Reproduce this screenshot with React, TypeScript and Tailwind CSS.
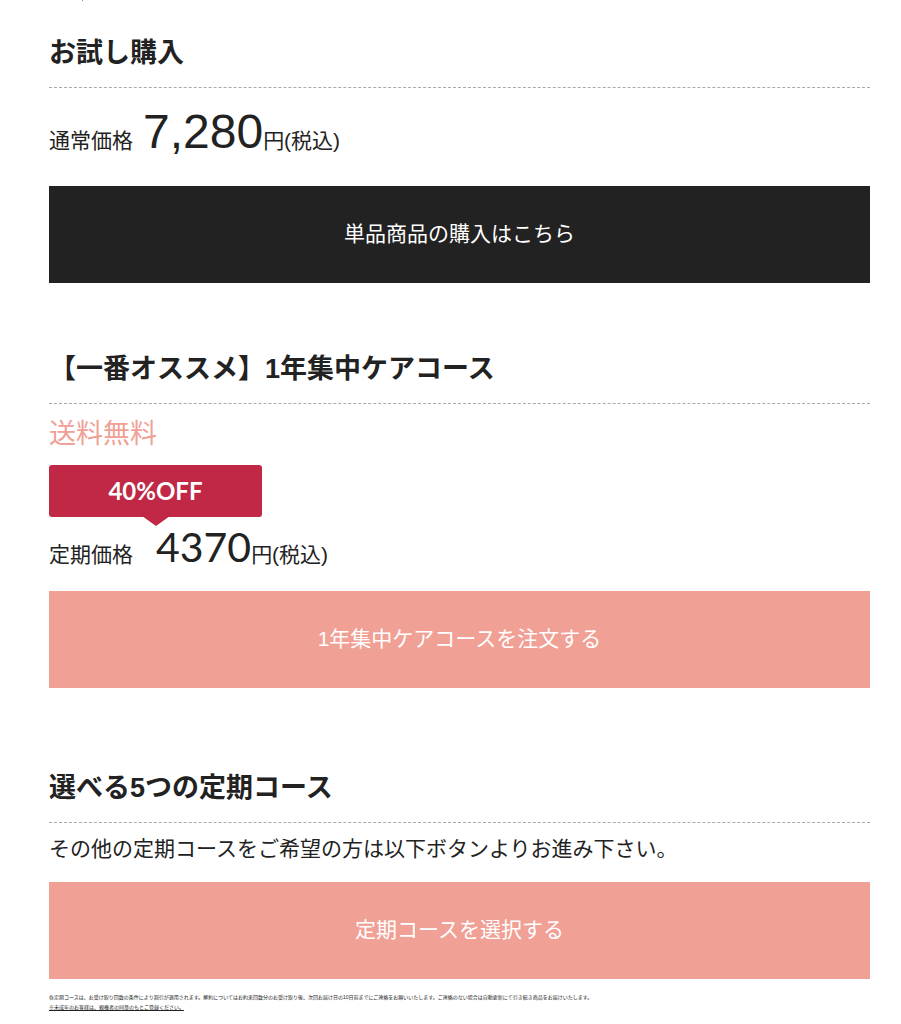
import type { ReactNode } from 'react';

function Heading({ children }: { children: ReactNode }) {
  return (
    <h2 className="border-b border-dashed border-[#aaaaaa] pt-px pb-[14px] text-[27px] leading-10 font-bold">
      {children}
    </h2>
  );
}

function OrderLink({ dark = false, children }: { dark?: boolean; children: ReactNode }) {
  return (
    <a
      href="#order"
      className={`flex min-h-[97px] items-center justify-center px-4 pb-[2px] text-center text-[21px] leading-8 text-white ${
        dark ? 'bg-[#222222]' : 'bg-[#f0a095]'
      }`}
    >
      {children}
    </a>
  );
}

export default function App() {
  return (
    <main className="bg-white pr-[31px] pl-[49px] font-['Liberation_Sans','Noto_Sans_CJK_JP',sans-serif] text-[21px] text-[#222222]">
      <div className="h-8">
        <div className="ml-[33px] h-px w-px bg-[#999999]" />
      </div>

      <section>
        <Heading>お試し購入</Heading>
        <p className="flex items-baseline pt-4 pb-[17px] leading-14">
          <span>通常価格</span>
          <span className="ml-[10px] text-[48px]">7,280</span>
          <span>円(税込)</span>
        </p>
        <OrderLink dark>単品商品の購入はこちら</OrderLink>
      </section>

      <section className="pt-[65px]">
        <Heading>【一番オススメ】1年集中ケアコース</Heading>
        <p className="mt-[10px] text-[27px] leading-10 text-[#f0a095]">送料無料</p>
        <div className="relative mt-[11px] flex h-[52px] w-[213px] items-center justify-center rounded-[3px] bg-[#c02845] font-['Lato',sans-serif] text-2xl font-bold text-white">
          40%OFF
          <svg
            className="absolute top-full left-1/2 -mt-px h-[10px] w-7 -translate-x-1/2"
            viewBox="0 0 28 10"
            aria-hidden="true"
          >
            <path d="M0 0H28L14 10Z" fill="#c02845" />
          </svg>
        </div>
        <p className="flex items-baseline pt-[2px] pb-2 leading-14">
          <span>定期価格</span>
          <span className="ml-[23px] font-['Lato',sans-serif] text-[41px]">4370</span>
          <span>円(税込)</span>
        </p>
        <OrderLink>1年集中ケアコースを注文する</OrderLink>
      </section>

      <section className="pt-[79px]">
        <Heading>選べる5つの定期コース</Heading>
        <p className="pt-[10px] pb-[17px] leading-8">
          その他の定期コースをご希望の方は以下ボタンよりお進み下さい。
        </p>
        <OrderLink>定期コースを選択する</OrderLink>
      </section>

      <footer className="pt-[13px] pb-3 text-[5px] leading-[10px]">
        <p>
          各定期コースは、お受け取り回数の条件により割引が適用されます。解約についてはお約束回数分のお受け取り後、次回お届け日の10日前までにご連絡をお願いいたします。ご連絡のない場合は自動更新にて引き続き商品をお届けいたします。
        </p>
        <p className="underline">※未成年のお客様は、親権者の同意のもとご登録ください。</p>
      </footer>
    </main>
  );
}
